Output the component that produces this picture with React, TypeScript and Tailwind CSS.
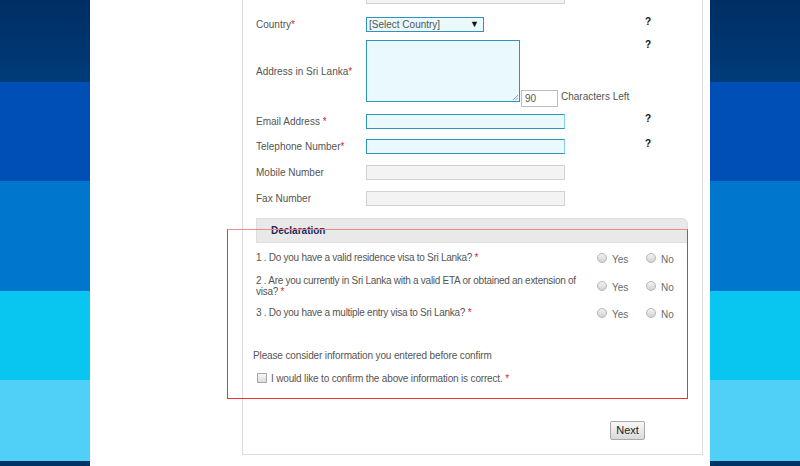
import React from 'react'

const font = "font-['Liberation_Sans',Arial,sans-serif]"

function Stripe() {
  return (
    <div className="flex w-[90px] shrink-0 flex-col">
      <div className="h-[82px] bg-gradient-to-b from-[#002d63] to-[#003c7a]" />
      <div className="h-[99px] bg-[#004fb6]" />
      <div className="h-[110px] bg-[#0076cd]" />
      <div className="h-[89px] bg-[#09c6f1]" />
      <div className="h-[81px] bg-[#50d0f6]" />
      <div className="h-[5px] bg-[#003366]" />
    </div>
  )
}

function Req({ space }: { space?: boolean }) {
  return <span className="text-[#e0252b]">{space ? ' *' : '*'}</span>
}

function Help() {
  return <span className="text-[10px] font-bold leading-[10px] text-[#111]">?</span>
}

interface RowProps {
  label?: React.ReactNode
  help?: boolean
  className: string
  children: React.ReactNode
}

function Row({ label, help, className, children }: RowProps) {
  return (
    <div className={`flex ${className}`}>
      <div className="flex w-[110px] shrink-0 items-center text-[10px] text-[#555]">{label}</div>
      <div className="flex w-[279px] shrink-0 items-end">{children}</div>
      <div className="flex items-start">{help && <Help />}</div>
    </div>
  )
}

const cyanInput = 'h-[15px] w-[199px] border border-[#2f93bb] border-r-[#85d0e8] bg-[#e9f9fd]'
const grayInput = 'h-[15px] w-[199px] border border-[#d2d2d2] bg-[#f3f3f3]'

function Radio({ label }: { label: string }) {
  return (
    <div className="flex items-center">
      <span className="h-[10px] w-[10px] rounded-full border border-[#b4b4b4] bg-gradient-to-b from-[#f4f4f4] to-[#d2d2d2]" />
      <span className="ml-[5px] pt-[3px] text-[10px] text-[#6a6a6a]">{label}</span>
    </div>
  )
}

function Question({ children, className }: { children: React.ReactNode; className: string }) {
  return (
    <div className={`flex items-center ${className}`}>
      <div className="w-[338px] shrink-0 text-[10px] leading-[11px] tracking-[-0.27px] text-[#555]">{children}</div>
      <div className="ml-[3px] w-[49px] shrink-0">
        <Radio label="Yes" />
      </div>
      <Radio label="No" />
    </div>
  )
}

export default function App() {
  return (
    <div className={`relative flex h-[466px] w-[800px] overflow-hidden bg-white ${font}`}>
      <Stripe />
      <div className="w-[620px] shrink-0 pl-[152px] pr-[7px]">
        <div className="h-[455px] border-x border-b border-[#dcdcdc]">
          <div className="flex flex-col pl-[13px] pr-[14px]">
            <Row className="-mt-[11px] h-[15px]" label={<span className="pl-[1px]">.</span>}>
              <div className={grayInput} />
            </Row>

            <Row className="mt-[13px] h-[15px]" help label={<span>Country<Req /></span>}>
              <div className="flex h-[15px] w-[118px] items-center justify-between border border-[#2f93bb] bg-[#e9f9fd] pl-[2px] pr-[4px]">
                <span className="text-[10px] leading-none text-[#555]">[Select Country]</span>
                <span className="text-[9px] leading-none text-[#111]">▼</span>
              </div>
            </Row>

            <Row className="mt-[8px] h-[62px]" help label={<span>Address in Sri Lanka<Req /></span>}>
              <div className="relative h-[62px] w-[154px] shrink-0 border border-[#2f93bb] bg-[#e9f9fd]">
                <svg className="absolute bottom-[1px] right-[1px]" width="6" height="6" viewBox="0 0 6 6">
                  <path d="M1 6L6 1M3.5 6L6 3.5" stroke="#888" strokeWidth="0.8" />
                </svg>
              </div>
              <div className="ml-[1px] flex h-[17px] w-[37px] shrink-0 translate-y-[5px] items-center border border-[#bdbdbd] bg-white pl-[3px] text-[10px] text-[#555]">
                90
              </div>
              <span className="ml-[3px] translate-y-[2px] whitespace-nowrap text-[10px] text-[#555]">Characters Left</span>
            </Row>

            <Row className="mt-[12px] h-[15px]" help label={<span>Email Address<Req space /></span>}>
              <div className={cyanInput} />
            </Row>

            <Row className="mt-[10px] h-[15px]" help label={<span>Telephone Number<Req /></span>}>
              <div className={cyanInput} />
            </Row>

            <Row className="mt-[11px] h-[15px]" label="Mobile Number">
              <div className={grayInput} />
            </Row>

            <Row className="mt-[11px] h-[15px]" label="Fax Number">
              <div className={grayInput} />
            </Row>

            <div className="mt-[12px] flex h-[25px] items-center rounded-tr-[6px] border border-[#dedede] bg-[#e9e9e9] pl-[14px]">
              <span className="text-[10px] font-bold text-[#1c2a5c]">Declaration</span>
            </div>

            <Question className="mt-[9px] h-[11px]">
              1 . Do you have a valid residence visa to Sri Lanka? <Req />
            </Question>
            <Question className="mt-[12px] h-[22px]">
              <span className="whitespace-nowrap">2 . Are you currently in Sri Lanka with a valid ETA or obtained an extension of</span>
              <br />
              visa? <Req />
            </Question>
            <Question className="mt-[10px] h-[11px]">
              3 . Do you have a multiple entry visa to Sri Lanka? <Req />
            </Question>

            <p className="-ml-[3px] mt-[32px] text-[10px] leading-[12px] tracking-[-0.13px] text-[#555]">
              Please consider information you entered before confirm
            </p>

            <div className="mt-[7px] flex items-center">
              <span className="ml-[1px] h-[10px] w-[10px] border border-[#a9a9a9] bg-gradient-to-b from-[#f7f7f7] to-[#dcdcdc]" />
              <span className="ml-[4px] pt-[2px] text-[10px] tracking-[-0.17px] text-[#555]">
                I would like to confirm the above information is correct. <Req />
              </span>
            </div>

            <div className="mt-[35px] flex pl-[354px]">
              <button className="flex h-[19px] w-[35px] items-center justify-center rounded-[2px] border border-[#a9a9a9] bg-gradient-to-b from-[#f8f8f8] to-[#dadada] text-[11px] text-[#222]">
                Next
              </button>
            </div>
          </div>
        </div>
      </div>
      <Stripe />

      <div className="pointer-events-none absolute left-[227px] top-[229px] h-[170px] w-[461px] border border-[#e8353a] border-t-[#ef8a8c]" />
    </div>
  )
}
